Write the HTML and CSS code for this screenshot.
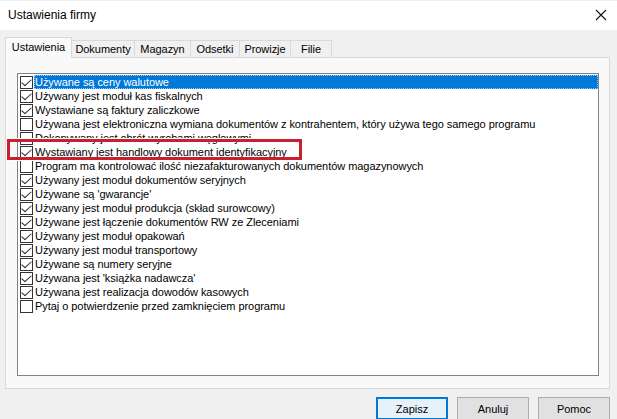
FILE: index.html
```html
<!DOCTYPE html>
<html lang="pl">
<head>
<meta charset="utf-8">
<title>Ustawienia firmy</title>
<link rel="stylesheet" href="styles.css">
</head>
<body>
<div class="window">
  <div class="titlebar">
    <span class="title">Ustawienia firmy</span>
    <svg class="close" width="12" height="12" viewBox="0 0 12 12"><path d="M1 1L11 11M11 1L1 11" stroke="#111" stroke-width="1.1" fill="none"/></svg>
  </div>
  <div class="content">
    <div class="tabs">
      <div class="tab selected t1">Ustawienia</div>
      <div class="tab t2">Dokumenty</div>
      <div class="tab t3">Magazyn</div>
      <div class="tab t4">Odsetki</div>
      <div class="tab t5">Prowizje</div>
      <div class="tab t6">Filie</div>
    </div>
    <div class="panel">
      <div class="listbox">
        <div class="item active"><span class="cb on"></span><span class="label">Używane są ceny walutowe</span></div>
        <div class="item"><span class="cb on"></span><span class="label">Używany jest moduł kas fiskalnych</span></div>
        <div class="item"><span class="cb on"></span><span class="label">Wystawiane są faktury zaliczkowe</span></div>
        <div class="item"><span class="cb"></span><span class="label">Używana jest elektroniczna wymiana dokumentów z kontrahentem, który używa tego samego programu</span></div>
        <div class="item"><span class="cb"></span><span class="label">Dokonywany jest obrót wyrobami węglowymi</span></div>
        <div class="item"><span class="cb on"></span><span class="label">Wystawiany jest handlowy dokument identyfikacyjny</span></div>
        <div class="item"><span class="cb"></span><span class="label">Program ma kontrolować ilość niezafakturowanych dokumentów magazynowych</span></div>
        <div class="item"><span class="cb on"></span><span class="label">Używany jest moduł dokumentów seryjnych</span></div>
        <div class="item"><span class="cb on"></span><span class="label">Używane są 'gwarancje'</span></div>
        <div class="item"><span class="cb on"></span><span class="label">Używany jest moduł produkcja (skład surowcowy)</span></div>
        <div class="item"><span class="cb on"></span><span class="label">Używane jest łączenie dokumentów RW ze Zleceniami</span></div>
        <div class="item"><span class="cb on"></span><span class="label">Używany jest moduł opakowań</span></div>
        <div class="item"><span class="cb on"></span><span class="label">Używany jest moduł transportowy</span></div>
        <div class="item"><span class="cb on"></span><span class="label">Używane są numery seryjne</span></div>
        <div class="item"><span class="cb on"></span><span class="label">Używana jest 'książka nadawcza'</span></div>
        <div class="item"><span class="cb on"></span><span class="label">Używana jest realizacja dowodów kasowych</span></div>
        <div class="item"><span class="cb"></span><span class="label">Pytaj o potwierdzenie przed zamknięciem programu</span></div>
      </div>
    </div>
    <div class="buttons">
      <button class="btn default">Zapisz</button>
      <button class="btn">Anuluj</button>
      <button class="btn">Pomoc</button>
    </div>
  </div>
  <div class="highlight-box"></div>
</div>
</body>
</html>
```

FILE: styles.css
```css
* { box-sizing: border-box; }
html, body {
  margin: 0;
  padding: 0;
  width: 617px;
  height: 419px;
  overflow: hidden;
  background: #f0f0f0;
}
.window {
  position: relative;
  width: 617px;
  height: 419px;
  font-family: "Liberation Sans", Arial, sans-serif;
  font-size: 11px;
  letter-spacing: -0.05px;
  color: #000;
  background: #f0f0f0;
}
.titlebar {
  height: 30px;
  background: #fff;
  border-top: 1px solid #e4f1f8;
  display: flex;
  align-items: center;
  justify-content: space-between;
  padding: 0 10px 1px 8px;
}
.title { font-size: 12px; letter-spacing: 0; }
.close { display: block; }
.content {
  padding: 7px 7px 0 5px;
}
.tabs {
  display: flex;
  align-items: flex-end;
  height: 20px;
  position: relative;
  z-index: 1;
}
.tab {
  height: 17px;
  line-height: 16px;
  border: 1px solid #d9d9d9;
  border-bottom: none;
  background: #f0f0f0;
  text-align: center;
  margin-left: -1px;
  white-space: nowrap;
}
.tab.selected {
  height: 21px;
  margin-bottom: -1px;
  margin-left: 0;
  background: #f9f9f9;
  line-height: 18px;
  z-index: 2;
}
.t1 { width: 67px; }
.t2 { width: 64px; }
.t3 { width: 57px; }
.t4 { width: 50px; }
.t5 { width: 52px; }
.t6 { width: 42px; }
.panel {
  border: 1px solid #d9d9d9;
  background: #f9f9f9;
  padding: 15px 10px 12px 11px;
}
.listbox {
  height: 303px;
  border: 1px solid #828282;
  background: #fff;
  padding-top: 1px;
  overflow: hidden;
}
.item {
  display: flex;
  height: 14px;
  line-height: 14px;
  white-space: nowrap;
}
.cb {
  flex: none;
  width: 13px;
  height: 13px;
  margin: 1px 0 0 2px;
  border: 1px solid #333;
  background: #fff;
  position: relative;
}
.cb.on::after {
  content: "";
  position: absolute;
  left: 3px;
  top: 0px;
  width: 4px;
  height: 8px;
  border-right: 1px solid #333;
  border-bottom: 1px solid #333;
  transform: rotate(40deg) skewX(-8deg);
  transform-origin: center;
}
.label {
  flex: 1;
  margin-left: 1px;
  padding-left: 1px;
}
.item.active .label {
  background: #0078d7;
  color: #fff;
  outline: 1px dotted #9cc9ef;
  outline-offset: -1px;
}
.buttons {
  display: flex;
  justify-content: flex-end;
  gap: 9px;
  margin-top: 8px;
}
.btn {
  width: 72px;
  height: 23px;
  font-family: "Liberation Sans", Arial, sans-serif;
  font-size: 11px;
  color: #000;
  background: #e1e1e1;
  border: 1px solid #adadad;
  padding: 0;
}
.btn.default {
  border: 2px solid #0078d7;
  background: #e5f1fb;
}
.highlight-box {
  position: absolute;
  left: 7px;
  top: 139px;
  width: 295px;
  height: 21px;
  border: 3px solid #c8202e;
  box-shadow: 0 0 0 1px #fff;
  pointer-events: none;
}
```
